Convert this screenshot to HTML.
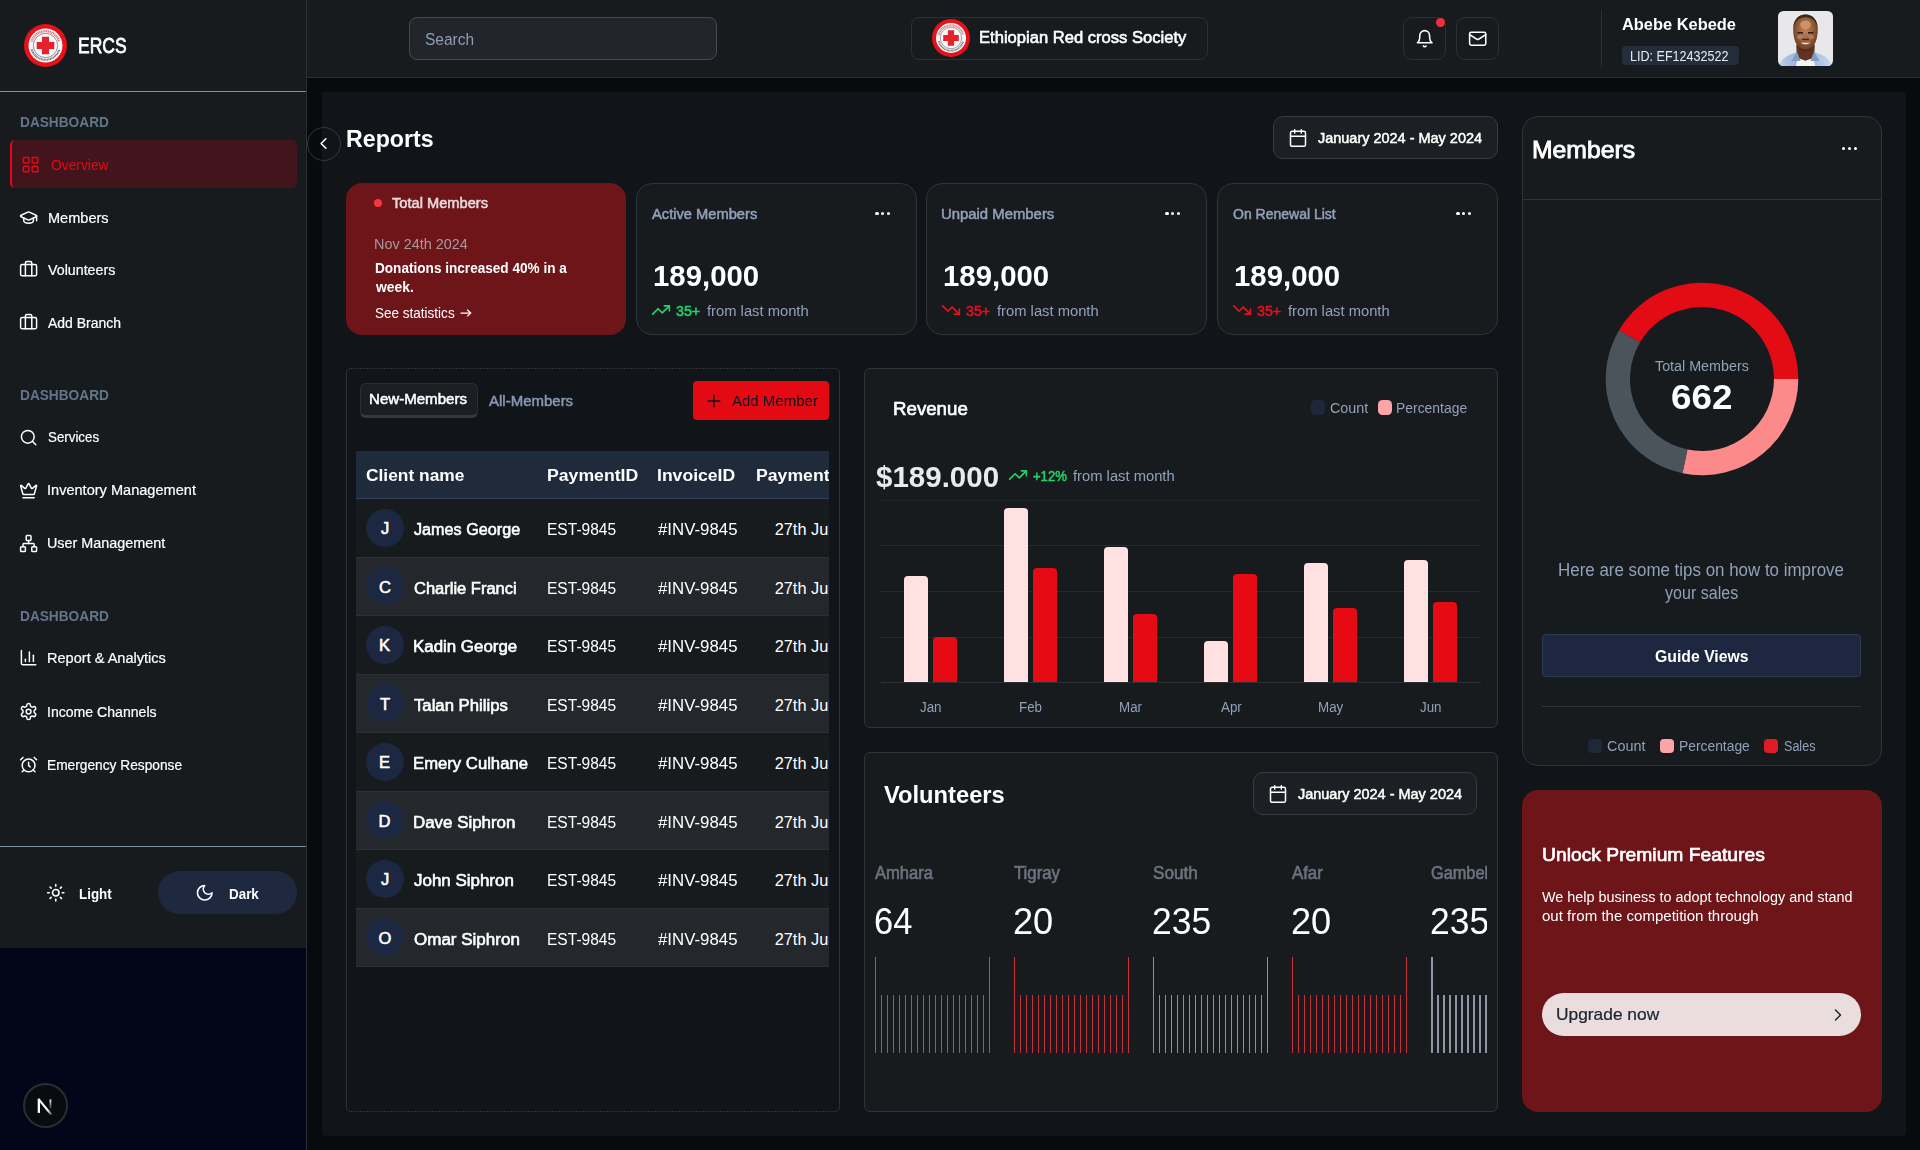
<!DOCTYPE html><html lang="en"><head><meta charset="utf-8"><title>ERCS Dashboard</title><style>
html,body{margin:0;padding:0;background:#070b0e;}
body{width:1920px;height:1150px;position:relative;overflow:hidden;font-family:"Liberation Sans",sans-serif;}
.a{position:absolute;}
.t{position:absolute;white-space:nowrap;transform-origin:0 50%;line-height:1;}
</style></head><body><div class="a" style="left:0px;top:0px;width:1920px;height:1150px;background:#070b0e;"></div><div class="a" style="left:0px;top:0px;width:306px;height:948px;background:#181b1e;"></div><div class="a" style="left:0px;top:948px;width:306px;height:202px;background:#020618;"></div><div class="a" style="left:306px;top:0px;width:1px;height:1150px;background:#2b2f34;"></div><div class="a" style="left:0px;top:91px;width:306px;height:1px;background:#8391a8;"></div><svg class="a" style="left:24px;top:24px" width="43" height="43" viewBox="0 0 100 100"><circle cx="50" cy="50" r="50" fill="#e8101a"/><circle cx="50" cy="50" r="39.5" fill="#f8f8f8"/><circle cx="50" cy="50" r="28.3" fill="none" stroke="#555a66" stroke-width="1.5"/><path d="M17.83 41.38A33.3 33.3 0 0 1 82.17 41.38" fill="none" stroke="#e2555d" stroke-width="5.2" stroke-dasharray="2.6 1.5" opacity=".85"/><path d="M17.83 58.62A33.3 33.3 0 0 0 82.17 58.62" fill="none" stroke="#3f434c" stroke-width="4.6" stroke-dasharray="2.2 1.4" opacity=".8"/><path d="M41.8 29.500h16.400v12.300H70.500v16.400H58.200V70.500h-16.400V58.200H29.500v-16.400h12.300z" fill="#e6212b"/></svg><span class="t" id="t0" style="left:77.50px;top:35.13px;font-size:21.7px;color:#ffffff;-webkit-text-stroke:0.76px #ffffff;transform:scaleX(0.8061);">ERCS</span><span class="t" id="t1" style="left:19.60px;top:115.11px;font-size:14.28px;color:#64748b;font-weight:700;transform:scaleX(0.9586);">DASHBOARD</span><span class="t" id="t2" style="left:19.60px;top:388.11px;font-size:14.28px;color:#64748b;font-weight:700;transform:scaleX(0.9586);">DASHBOARD</span><span class="t" id="t3" style="left:19.60px;top:608.81px;font-size:14.28px;color:#64748b;font-weight:700;transform:scaleX(0.9586);">DASHBOARD</span><div class="a" style="left:10px;top:140px;width:287px;height:48px;background:#42151c;border-radius:5px;border-left:2px solid #e50914;box-sizing:border-box;"></div><svg class="a" style="left:20.9px;top:155px;" width="19.2" height="19.2" viewBox="0 0 24 24" fill="none" stroke="#e50914" stroke-width="1.85" stroke-linecap="round" stroke-linejoin="round"><rect width="7" height="7" x="3" y="3" rx="1"/><rect width="7" height="7" x="14" y="3" rx="1"/><rect width="7" height="7" x="14" y="14" rx="1"/><rect width="7" height="7" x="3" y="14" rx="1"/></svg><span class="t" id="t4" style="left:50.60px;top:158.05px;font-size:14.59px;color:#e50914;transform:scaleX(0.9473);">Overview</span><svg class="a" style="left:19.2px;top:208.10000000000002px;" width="19.2" height="19.2" viewBox="0 0 24 24" fill="none" stroke="#ffffff" stroke-width="1.85" stroke-linecap="round" stroke-linejoin="round"><path d="M21.42 10.922a1 1 0 0 0-.019-1.838L12.83 5.18a2 2 0 0 0-1.66 0L2.6 9.08a1 1 0 0 0 0 1.832l8.57 3.908a2 2 0 0 0 1.66 0z"/><path d="M22 10v6"/><path d="M6 12.5V16a6 3 0 0 0 12 0v-3.5"/></svg><span class="t" id="t5" style="left:48.00px;top:211.05px;font-size:14.59px;color:#ffffff;-webkit-text-stroke:0.20px #ffffff;transform:scaleX(0.9972);">Members</span><svg class="a" style="left:19.2px;top:259.4px;" width="19.2" height="19.2" viewBox="0 0 24 24" fill="none" stroke="#ffffff" stroke-width="1.85" stroke-linecap="round" stroke-linejoin="round"><rect width="20" height="14" x="2" y="7" rx="2" ry="2"/><path d="M16 21V5a2 2 0 0 0-2-2h-4a2 2 0 0 0-2 2v16"/></svg><span class="t" id="t6" style="left:48.30px;top:263.05px;font-size:14.59px;color:#ffffff;-webkit-text-stroke:0.20px #ffffff;transform:scaleX(0.9767);">Volunteers</span><svg class="a" style="left:19.2px;top:311.99999999999994px;" width="19.2" height="19.2" viewBox="0 0 24 24" fill="none" stroke="#ffffff" stroke-width="1.85" stroke-linecap="round" stroke-linejoin="round"><rect width="20" height="14" x="2" y="7" rx="2" ry="2"/><path d="M16 21V5a2 2 0 0 0-2-2h-4a2 2 0 0 0-2 2v16"/></svg><span class="t" id="t7" style="left:48.30px;top:315.65px;font-size:14.59px;color:#ffffff;-webkit-text-stroke:0.20px #ffffff;transform:scaleX(0.9584);">Add Branch</span><svg class="a" style="left:19.2px;top:428.1px;" width="19.2" height="19.2" viewBox="0 0 24 24" fill="none" stroke="#ffffff" stroke-width="1.85" stroke-linecap="round" stroke-linejoin="round"><circle cx="11" cy="11" r="8"/><path d="m21 21-4.3-4.3"/></svg><span class="t" id="t8" style="left:48.29px;top:430.35px;font-size:14.59px;color:#ffffff;-webkit-text-stroke:0.20px #ffffff;transform:scaleX(0.9137);">Services</span><svg class="a" style="left:19.2px;top:480.59999999999997px;" width="19.2" height="19.2" viewBox="0 0 24 24" fill="none" stroke="#ffffff" stroke-width="1.85" stroke-linecap="round" stroke-linejoin="round"><path d="M11.562 3.266a.5.5 0 0 1 .876 0L15.39 8.87a1 1 0 0 0 1.516.294L21.183 5.5a.5.5 0 0 1 .798.519l-2.834 10.246a1 1 0 0 1-.956.734H5.81a1 1 0 0 1-.957-.734L2.02 6.02a.5.5 0 0 1 .798-.519l4.276 3.664a1 1 0 0 0 1.516-.294z"/><path d="M5 21h14"/></svg><span class="t" id="t9" style="left:47.30px;top:483.25px;font-size:14.59px;color:#ffffff;-webkit-text-stroke:0.20px #ffffff;transform:scaleX(0.9989);">Inventory Management</span><svg class="a" style="left:19.2px;top:534.0px;" width="19.2" height="19.2" viewBox="0 0 24 24" fill="none" stroke="#ffffff" stroke-width="1.85" stroke-linecap="round" stroke-linejoin="round"><rect x="16" y="16" width="6" height="6" rx="1"/><rect x="2" y="16" width="6" height="6" rx="1"/><rect x="9" y="2" width="6" height="6" rx="1"/><path d="M5 16v-3a1 1 0 0 1 1-1h12a1 1 0 0 1 1 1v3"/><path d="M12 12V8"/></svg><span class="t" id="t10" style="left:47.32px;top:536.25px;font-size:14.59px;color:#ffffff;-webkit-text-stroke:0.20px #ffffff;transform:scaleX(0.9851);">User Management</span><svg class="a" style="left:19.2px;top:648.0px;" width="19.2" height="19.2" viewBox="0 0 24 24" fill="none" stroke="#ffffff" stroke-width="1.85" stroke-linecap="round" stroke-linejoin="round"><path d="M3 3v16a2 2 0 0 0 2 2h16"/><path d="M18 17V9"/><path d="M13 17V5"/><path d="M8 17v-3"/></svg><span class="t" id="t11" style="left:47.30px;top:651.45px;font-size:14.59px;color:#ffffff;-webkit-text-stroke:0.20px #ffffff;transform:scaleX(0.9981);">Report &amp; Analytics</span><svg class="a" style="left:19.2px;top:701.9px;" width="19.2" height="19.2" viewBox="0 0 24 24" fill="none" stroke="#ffffff" stroke-width="1.85" stroke-linecap="round" stroke-linejoin="round"><path d="M12.22 2h-.44a2 2 0 0 0-2 2v.18a2 2 0 0 1-1 1.73l-.43.25a2 2 0 0 1-2 0l-.15-.08a2 2 0 0 0-2.73.73l-.22.38a2 2 0 0 0 .73 2.73l.15.1a2 2 0 0 1 1 1.72v.51a2 2 0 0 1-1 1.74l-.15.09a2 2 0 0 0-.73 2.73l.22.38a2 2 0 0 0 2.73.73l.15-.08a2 2 0 0 1 2 0l.43.25a2 2 0 0 1 1 1.73V20a2 2 0 0 0 2 2h.44a2 2 0 0 0 2-2v-.18a2 2 0 0 1 1-1.73l.43-.25a2 2 0 0 1 2 0l.15.08a2 2 0 0 0 2.73-.73l.22-.39a2 2 0 0 0-.73-2.73l-.15-.08a2 2 0 0 1-1-1.74v-.5a2 2 0 0 1 1-1.74l.15-.09a2 2 0 0 0 .73-2.73l-.22-.38a2 2 0 0 0-2.73-.73l-.15.08a2 2 0 0 1-2 0l-.43-.25a2 2 0 0 1-1-1.73V4a2 2 0 0 0-2-2z"/><circle cx="12" cy="12" r="3"/></svg><span class="t" id="t12" style="left:47.33px;top:704.75px;font-size:14.59px;color:#ffffff;-webkit-text-stroke:0.20px #ffffff;transform:scaleX(0.9656);">Income Channels</span><svg class="a" style="left:19.2px;top:754.8px;" width="19.2" height="19.2" viewBox="0 0 24 24" fill="none" stroke="#ffffff" stroke-width="1.85" stroke-linecap="round" stroke-linejoin="round"><circle cx="12" cy="13" r="8"/><path d="M12 9v4l2 2"/><path d="M5 3 2 6"/><path d="m22 6-3-3"/><path d="M6.38 18.7 4 21"/><path d="M17.64 18.67 20 21"/></svg><span class="t" id="t13" style="left:47.35px;top:757.65px;font-size:14.59px;color:#ffffff;-webkit-text-stroke:0.20px #ffffff;transform:scaleX(0.9416);">Emergency Response</span><div class="a" style="left:0px;top:846px;width:306px;height:1px;background:#8391a8;"></div><svg class="a" style="left:46px;top:883px;" width="19.5" height="19.5" viewBox="0 0 24 24" fill="none" stroke="#ffffff" stroke-width="1.9" stroke-linecap="round" stroke-linejoin="round"><circle cx="12" cy="12" r="4"/><path d="M12 2v2"/><path d="M12 20v2"/><path d="m4.93 4.93 1.41 1.41"/><path d="m17.66 17.66 1.41 1.41"/><path d="M2 12h2"/><path d="M20 12h2"/><path d="m6.34 17.66-1.41 1.41"/><path d="m19.07 4.93-1.41 1.41"/></svg><span class="t" id="t14" style="left:79.40px;top:886.68px;font-size:14.08px;color:#ffffff;font-weight:700;transform:scaleX(0.9507);">Light</span><div class="a" style="left:158px;top:871px;width:138.8px;height:42.8px;background:#1e2940;border-radius:22px;"></div><svg class="a" style="left:195px;top:882.6px;" width="19.5" height="19.5" viewBox="0 0 24 24" fill="none" stroke="#ffffff" stroke-width="1.9" stroke-linecap="round" stroke-linejoin="round"><path d="M12 3a6 6 0 0 0 9 9 9 9 0 1 1-9-9Z"/></svg><span class="t" id="t15" style="left:228.70px;top:886.68px;font-size:14.08px;color:#ffffff;font-weight:700;transform:scaleX(0.9531);">Dark</span><div class="a" style="left:23px;top:1083px;width:45px;height:45px;background:#090c0f;border-radius:50%;border:2px solid #2a2d31;box-sizing:border-box;"></div><svg class="a" style="left:36px;top:1097px" width="18" height="20" viewBox="0 0 18 20"><defs><linearGradient id="ng" gradientUnits="userSpaceOnUse" x1="2.6" y1="2.1" x2="15.3" y2="17.6"><stop offset="0.7" stop-color="#fff"/><stop offset="1" stop-color="#fff" stop-opacity="0.3"/></linearGradient><linearGradient id="ng2" gradientUnits="userSpaceOnUse" x1="0" y1="2.4" x2="0" y2="11.3"><stop offset="0.1" stop-color="#fff" stop-opacity="0.9"/><stop offset="1" stop-color="#fff" stop-opacity="0.15"/></linearGradient></defs><path d="M2.850 1.700V15.900" stroke="#fff" stroke-width="2.300" fill="none"/><path d="M2.600 2.100L15.300 17.600" stroke="url(#ng)" stroke-width="2.200" fill="none"/><path d="M14.450 2.400v8.900" stroke="url(#ng2)" stroke-width="1.800" fill="none"/></svg><div class="a" style="left:307px;top:0px;width:1613px;height:77px;background:#181b1e;"></div><div class="a" style="left:307px;top:77px;width:1613px;height:1px;background:#2b2f34;"></div><div class="a" style="left:409px;top:17px;width:308px;height:43px;background:#22262a;border:1px solid #464a4f;border-radius:8px;box-sizing:border-box;"></div><span class="t" id="t16" style="left:424.80px;top:30.76px;font-size:16.35px;color:#8d9db5;transform:scaleX(0.9479);">Search</span><div class="a" style="left:911px;top:17px;width:297px;height:43px;border:1px solid #2b2f34;border-radius:8px;box-sizing:border-box;"></div><svg class="a" style="left:932px;top:19.2px" width="38" height="38" viewBox="0 0 100 100"><circle cx="50" cy="50" r="50" fill="#e8101a"/><circle cx="50" cy="50" r="39.5" fill="#f8f8f8"/><circle cx="50" cy="50" r="28.3" fill="none" stroke="#555a66" stroke-width="1.5"/><path d="M17.83 41.38A33.3 33.3 0 0 1 82.17 41.38" fill="none" stroke="#e2555d" stroke-width="5.2" stroke-dasharray="2.6 1.5" opacity=".85"/><path d="M17.83 58.62A33.3 33.3 0 0 0 82.17 58.62" fill="none" stroke="#3f434c" stroke-width="4.6" stroke-dasharray="2.2 1.4" opacity=".8"/><path d="M41.8 29.500h16.400v12.300H70.500v16.400H58.200V70.500h-16.400V58.200H29.500v-16.400h12.300z" fill="#e6212b"/></svg><span class="t" id="t17" style="left:979.49px;top:29.88px;font-size:16.56px;color:#ffffff;-webkit-text-stroke:0.58px #ffffff;transform:scaleX(1.0017);">Ethiopian Red cross Society</span><div class="a" style="left:1403px;top:17px;width:43px;height:43px;border:1px solid #2b2f34;border-radius:9px;box-sizing:border-box;"></div><svg class="a" style="left:1415px;top:28.5px;" width="19.4" height="19.4" viewBox="0 0 24 24" fill="none" stroke="#ffffff" stroke-width="1.9" stroke-linecap="round" stroke-linejoin="round"><path d="M6 8a6 6 0 0 1 12 0c0 7 3 9 3 9H3s3-2 3-9"/><path d="M10.3 21a1.94 1.94 0 0 0 3.4 0"/></svg><div class="a" style="left:1436px;top:18px;width:9px;height:9px;background:#f0303c;border-radius:50%;"></div><div class="a" style="left:1456px;top:17px;width:43px;height:43px;border:1px solid #2b2f34;border-radius:9px;box-sizing:border-box;"></div><svg class="a" style="left:1467.7px;top:28.6px;" width="19.4" height="19.4" viewBox="0 0 24 24" fill="none" stroke="#ffffff" stroke-width="1.9" stroke-linecap="round" stroke-linejoin="round"><rect width="20" height="16" x="2" y="4" rx="2"/><path d="m22 7-8.97 5.7a1.94 1.94 0 0 1-2.06 0L2 7"/></svg><div class="a" style="left:1601px;top:10px;width:1px;height:57px;background:#2b2f34;"></div><span class="t" id="t18" style="left:1622.00px;top:15.93px;font-size:16.15px;color:#ffffff;font-weight:700;transform:scaleX(1.0166);">Abebe Kebede</span><div class="a" style="left:1622px;top:46px;width:117px;height:19px;background:#242e3a;border-radius:4px;"></div><span class="t" id="t19" style="left:1630.11px;top:49.48px;font-size:14.08px;color:#e6ebf2;transform:scaleX(0.8920);">LID: EF12432522</span><svg class="a" style="left:1778px;top:11px" width="55" height="55" viewBox="0 0 55 55"><defs><radialGradient id="fg" cx="0.5" cy="0.42" r="0.62"><stop offset="0" stop-color="#c08258"/><stop offset="0.45" stop-color="#9c6440"/><stop offset="0.8" stop-color="#744428"/><stop offset="1" stop-color="#4f2c1b"/></radialGradient><linearGradient id="sh" x1="0" x2="1"><stop offset="0" stop-color="#b9cfec"/><stop offset="0.3" stop-color="#9db8db"/><stop offset="0.7" stop-color="#a8c2e4"/><stop offset="1" stop-color="#c5d8f0"/></linearGradient><filter id="bl" x="-10%" y="-10%" width="120%" height="120%"><feGaussianBlur stdDeviation="0.45"/></filter><clipPath id="avc"><rect width="55" height="55" rx="5.5"/></clipPath></defs><rect width="55" height="55" rx="5.5" fill="#e8e8ea"/><g clip-path="url(#avc)"><g filter="url(#bl)"><path d="M1 57c1-8 6-12 14-14.500l9-3h7l9 3c8 2.500 13 6.500 14 14.500z" fill="url(#sh)"/><path d="M17.500 57l2-9.500 8 1.500 8-1.500 2 9.500z" fill="#f4f4f4"/><path d="M18.200 34h18.600l-.8 12.500-8.500 3.200-8.500-3.200z" fill="#5e3120"/><path d="M13.500 50l5.500-9.500 3.500 9.500z" fill="#7f9cc2"/><path d="M41.500 50l-5.500-9.500-3.500 9.500z" fill="#7f9cc2"/><path d="M27.500 3.600c7.200 0 12.300 5.600 12.300 14.800 0 4-.6 8.600-2.200 12.600-2 5-5.800 9.400-10.100 9.400s-8.100-4.400-10.100-9.400c-1.600-4-2.200-8.600-2.200-12.600 0-9.200 5.100-14.800 12.300-14.800z" fill="url(#fg)"/><path d="M15.300 17.500c.2-8.800 5.200-14 12.200-14s12 5.200 12.200 14c-1.400-7.400-5.400-11.200-12.200-11.200s-10.800 3.800-12.200 11.200z" fill="#2f1e16" opacity=".85"/><ellipse cx="27.500" cy="13.800" rx="5.400" ry="4.200" fill="#d99a72" opacity=".8"/><ellipse cx="22" cy="26" rx="3" ry="2.200" fill="#c78a63" opacity=".6"/><ellipse cx="33" cy="26" rx="3" ry="2.200" fill="#c78a63" opacity=".6"/><path d="M19.500 21.800h5.500M30 21.800h5.500" stroke="#2e1a12" stroke-width="1.500"/><path d="M24 27.800c1.500 1.200 5.500 1.200 7 0" stroke="#4a2415" stroke-width="1.200" fill="none"/><path d="M22.800 31.200c2 2.800 7.400 2.800 9.400 0-2 .7-7.400.7-9.400 0z" fill="#f6ece6"/><path d="M20.500 35.500c2.500 4.200 11.500 4.200 14 0-1.500 5.800-12.500 5.800-14 0z" fill="#3e2216" opacity=".8"/></g></g></svg><div class="a" style="left:322px;top:92px;width:1584px;height:1044px;background:#111418;border-radius:4px;"></div><div class="a" style="left:307px;top:127px;width:34px;height:34px;border:1px solid #34383d;border-radius:50%;box-sizing:border-box;"></div><svg class="a" style="left:314px;top:134.2px;" width="19" height="19" viewBox="0 0 24 24" fill="none" stroke="#ffffff" stroke-width="2" stroke-linecap="round" stroke-linejoin="round"><path d="m15 18-6-6 6-6"/></svg><span class="t" id="t20" style="left:345.71px;top:127.99px;font-size:23.4px;color:#ffffff;font-weight:700;transform:scaleX(0.9912);">Reports</span><div class="a" style="left:1273px;top:116px;width:225px;height:42.8px;background:#1c1f23;border:1px solid #383c42;border-radius:10px;box-sizing:border-box;"></div><svg class="a" style="left:1287.6px;top:127.9px;" width="20" height="20" viewBox="0 0 24 24" fill="none" stroke="#ffffff" stroke-width="1.8" stroke-linecap="round" stroke-linejoin="round"><path d="M8 2v4"/><path d="M16 2v4"/><rect width="18" height="18" x="3" y="4" rx="2"/><path d="M3 10h18"/></svg><span class="t" id="t21" style="left:1317.55px;top:130.78px;font-size:14.08px;color:#ffffff;-webkit-text-stroke:0.49px #ffffff;transform:scaleX(1.0274);">January 2024 - May 2024</span><div class="a" style="left:346px;top:183px;width:280px;height:152px;background:#6e1519;border-radius:16px;"></div><div class="a" style="left:374.3px;top:198.8px;width:8px;height:8px;background:#f9353f;border-radius:50%;"></div><span class="t" id="t22" style="left:391.86px;top:196.97px;font-size:13.97px;color:#e9dcdc;-webkit-text-stroke:0.49px #e9dcdc;transform:scaleX(1.0477);">Total Members</span><span class="t" id="t23" style="left:373.78px;top:236.98px;font-size:14.08px;color:#a89a9b;transform:scaleX(1.0248);">Nov 24th 2024</span><span class="t" id="t24" style="left:374.80px;top:261.18px;font-size:14.08px;color:#ffffff;font-weight:700;transform:scaleX(0.9653);">Donations increased 40% in a</span><span class="t" id="t25" style="left:375.79px;top:279.78px;font-size:14.08px;color:#ffffff;font-weight:700;transform:scaleX(0.9886);">week.</span><span class="t" id="t26" style="left:374.80px;top:305.68px;font-size:14.08px;color:#ffffff;transform:scaleX(0.9602);">See statistics</span><svg class="a" style="left:459.500px;top:308px" width="12" height="10" viewBox="0 0 12 10" fill="none" stroke="#fff" stroke-width="1.250"><path d="M0.500 5.100h10.200M7.200 1.800l3.500 3.300-3.500 3.300"/></svg><div class="a" style="left:636px;top:183px;width:281px;height:152px;background:#181b1e;border:1px solid #303439;border-radius:16px;box-sizing:border-box;"></div><span class="t" id="t27" style="left:651.86px;top:207.18px;font-size:14.08px;color:#90a1b9;-webkit-text-stroke:0.49px #90a1b9;transform:scaleX(1.0427);">Active Members</span><div class="a" style="left:875.45px;top:212.05px;width:3.1px;height:3.1px;background:#ffffff;border-radius:50%;"></div><div class="a" style="left:881.05px;top:212.05px;width:3.1px;height:3.1px;background:#ffffff;border-radius:50%;"></div><div class="a" style="left:886.65px;top:212.05px;width:3.1px;height:3.1px;background:#ffffff;border-radius:50%;"></div><span class="t" id="t28" style="left:652.52px;top:260.61px;font-size:30px;color:#ffffff;font-weight:700;transform:scaleX(0.9789);">189,000</span><svg class="a" style="left:651px;top:300px;" width="20" height="20" viewBox="0 0 24 24" fill="none" stroke="#22d369" stroke-width="2" stroke-linecap="round" stroke-linejoin="round"><polyline points="22 7 13.5 15.5 8.5 10.5 2 17"/><polyline points="16 7 22 7 22 13"/></svg><span class="t" id="t29" style="left:676.45px;top:304.02px;font-size:14.39px;color:#22d369;-webkit-text-stroke:0.50px #22d369;transform:scaleX(0.9921);">35+</span><span class="t" id="t30" style="left:706.60px;top:304.18px;font-size:14.08px;color:#90a1b9;transform:scaleX(1.0480);">from last month</span><div class="a" style="left:926px;top:183px;width:281px;height:152px;background:#181b1e;border:1px solid #303439;border-radius:16px;box-sizing:border-box;"></div><span class="t" id="t31" style="left:940.80px;top:207.18px;font-size:14.08px;color:#90a1b9;-webkit-text-stroke:0.49px #90a1b9;transform:scaleX(1.0567);">Unpaid Members</span><div class="a" style="left:1165.45px;top:212.05px;width:3.1px;height:3.1px;background:#ffffff;border-radius:50%;"></div><div class="a" style="left:1171.05px;top:212.05px;width:3.1px;height:3.1px;background:#ffffff;border-radius:50%;"></div><div class="a" style="left:1176.65px;top:212.05px;width:3.1px;height:3.1px;background:#ffffff;border-radius:50%;"></div><span class="t" id="t32" style="left:942.52px;top:260.61px;font-size:30px;color:#ffffff;font-weight:700;transform:scaleX(0.9789);">189,000</span><svg class="a" style="left:941px;top:299.6px;" width="20" height="20" viewBox="0 0 24 24" fill="none" stroke="#e5121f" stroke-width="2" stroke-linecap="round" stroke-linejoin="round"><polyline points="22 17 13.5 8.5 8.5 13.5 2 7"/><polyline points="16 17 22 17 22 11"/></svg><span class="t" id="t33" style="left:966.45px;top:304.02px;font-size:14.39px;color:#e5121f;-webkit-text-stroke:0.50px #e5121f;transform:scaleX(0.9921);">35+</span><span class="t" id="t34" style="left:996.60px;top:304.18px;font-size:14.08px;color:#90a1b9;transform:scaleX(1.0480);">from last month</span><div class="a" style="left:1217px;top:183px;width:281px;height:152px;background:#181b1e;border:1px solid #303439;border-radius:16px;box-sizing:border-box;"></div><span class="t" id="t35" style="left:1232.85px;top:207.18px;font-size:14.08px;color:#90a1b9;-webkit-text-stroke:0.49px #90a1b9;transform:scaleX(0.9945);">On Renewal List</span><div class="a" style="left:1456.45px;top:212.05px;width:3.1px;height:3.1px;background:#ffffff;border-radius:50%;"></div><div class="a" style="left:1462.05px;top:212.05px;width:3.1px;height:3.1px;background:#ffffff;border-radius:50%;"></div><div class="a" style="left:1467.65px;top:212.05px;width:3.1px;height:3.1px;background:#ffffff;border-radius:50%;"></div><span class="t" id="t36" style="left:1233.52px;top:260.61px;font-size:30px;color:#ffffff;font-weight:700;transform:scaleX(0.9789);">189,000</span><svg class="a" style="left:1232px;top:299.6px;" width="20" height="20" viewBox="0 0 24 24" fill="none" stroke="#e5121f" stroke-width="2" stroke-linecap="round" stroke-linejoin="round"><polyline points="22 17 13.5 8.5 8.5 13.5 2 7"/><polyline points="16 17 22 17 22 11"/></svg><span class="t" id="t37" style="left:1257.45px;top:304.02px;font-size:14.39px;color:#e5121f;-webkit-text-stroke:0.50px #e5121f;transform:scaleX(0.9921);">35+</span><span class="t" id="t38" style="left:1287.60px;top:304.18px;font-size:14.08px;color:#90a1b9;transform:scaleX(1.0480);">from last month</span><svg class="a" style="left:346px;top:368px" width="494" height="744" viewBox="0 0 494 744" fill="none" stroke="#2f3338" stroke-width="1"><path d="M5.0 0.500A4.5 4.5 0 0 0 0.500 5.0V739.0A4.5 4.5 0 0 0 5.0 743.5M489.0 0.500A4.5 4.5 0 0 1 493.5 5.0V739.0A4.5 4.5 0 0 1 489.0 743.5"/><path d="M5.0 0.500H489.0M5.0 743.5H489.0" stroke-dasharray="2 1"/></svg><div class="a" style="left:360px;top:383px;width:118px;height:35px;background:#1b1e22;border:1px solid #2b2f34;border-radius:6px;box-sizing:border-box;border-bottom:3px solid #35393e;"></div><span class="t" id="t39" style="left:369.29px;top:392.38px;font-size:14.08px;color:#ffffff;-webkit-text-stroke:0.49px #ffffff;transform:scaleX(1.0706);">New-Members</span><span class="t" id="t40" style="left:488.76px;top:394.18px;font-size:14.08px;color:#8697b2;-webkit-text-stroke:0.49px #8697b2;transform:scaleX(1.0647);">All-Members</span><div class="a" style="left:693px;top:381px;width:136px;height:39px;background:#e30a14;border-radius:4px;"></div><svg class="a" style="left:704.3px;top:391px;" width="20" height="20" viewBox="0 0 24 24" fill="none" stroke="#10161f" stroke-width="1.6" stroke-linecap="round" stroke-linejoin="round"><path d="M5 12h14"/><path d="M12 5v14"/></svg><span class="t" id="t41" style="left:731.60px;top:393.86px;font-size:14.7px;color:#10161f;transform:scaleX(1.0215);">Add Member</span><div class="a" style="left:356px;top:451px;width:473px;height:47.5px;background:#1f2a3b;"></div><div class="a" style="left:356px;top:498px;width:473px;height:1px;background:#33425a;"></div><span class="t" id="t42" style="left:366.00px;top:466.66px;font-size:16.35px;color:#ffffff;font-weight:700;transform:scaleX(1.0622);">Client name</span><span class="t" id="t43" style="left:546.72px;top:466.66px;font-size:16.35px;color:#ffffff;font-weight:700;transform:scaleX(1.0804);">PaymentID</span><span class="t" id="t44" style="left:656.72px;top:466.66px;font-size:16.35px;color:#ffffff;font-weight:700;transform:scaleX(1.0757);">InvoiceID</span><div class="a" style="left:356px;top:499px;width:473px;height:59px;background:#181b1e;"></div><div class="a" style="left:356px;top:557px;width:473px;height:1px;background:#2d3136;"></div><div class="a" style="left:366px;top:508.85px;width:38px;height:38px;background:#1c2741;border-radius:50%;"></div><span class="t" id="t45" style="left:381.00px;top:521.13px;font-size:16.56px;color:#ffffff;-webkit-text-stroke:0.58px #ffffff;transform:scaleX(1.0000);">J</span><span class="t" id="t46" style="left:414.08px;top:521.02px;font-size:16.46px;color:#ffffff;-webkit-text-stroke:0.58px #ffffff;transform:scaleX(0.9848);">James George</span><span class="t" id="t47" style="left:546.95px;top:521.11px;font-size:16.35px;color:#ffffff;transform:scaleX(0.9512);">EST-9845</span><span class="t" id="t48" style="left:657.80px;top:521.11px;font-size:16.35px;color:#ffffff;transform:scaleX(1.0305);">#INV-9845</span><div class="a" style="left:356px;top:558px;width:473px;height:58px;background:#24272b;"></div><div class="a" style="left:356px;top:615px;width:473px;height:1px;background:#2d3136;"></div><div class="a" style="left:366px;top:567.35px;width:38px;height:38px;background:#1c2741;border-radius:50%;"></div><span class="t" id="t49" style="left:379.00px;top:579.63px;font-size:16.56px;color:#ffffff;-webkit-text-stroke:0.58px #ffffff;transform:scaleX(1.0000);">C</span><span class="t" id="t50" style="left:414.09px;top:579.52px;font-size:16.46px;color:#ffffff;-webkit-text-stroke:0.58px #ffffff;transform:scaleX(1.0036);">Charlie Franci</span><span class="t" id="t51" style="left:546.95px;top:579.61px;font-size:16.35px;color:#ffffff;transform:scaleX(0.9512);">EST-9845</span><span class="t" id="t52" style="left:657.80px;top:579.61px;font-size:16.35px;color:#ffffff;transform:scaleX(1.0305);">#INV-9845</span><div class="a" style="left:356px;top:616px;width:473px;height:59px;background:#181b1e;"></div><div class="a" style="left:356px;top:674px;width:473px;height:1px;background:#2d3136;"></div><div class="a" style="left:366px;top:625.85px;width:38px;height:38px;background:#1c2741;border-radius:50%;"></div><span class="t" id="t53" style="left:379.00px;top:638.13px;font-size:16.56px;color:#ffffff;-webkit-text-stroke:0.58px #ffffff;transform:scaleX(1.0000);">K</span><span class="t" id="t54" style="left:413.07px;top:638.02px;font-size:16.46px;color:#ffffff;-webkit-text-stroke:0.58px #ffffff;transform:scaleX(1.0271);">Kadin George</span><span class="t" id="t55" style="left:546.95px;top:638.11px;font-size:16.35px;color:#ffffff;transform:scaleX(0.9512);">EST-9845</span><span class="t" id="t56" style="left:657.80px;top:638.11px;font-size:16.35px;color:#ffffff;transform:scaleX(1.0305);">#INV-9845</span><div class="a" style="left:356px;top:675px;width:473px;height:58px;background:#24272b;"></div><div class="a" style="left:356px;top:732px;width:473px;height:1px;background:#2d3136;"></div><div class="a" style="left:366px;top:684.35px;width:38px;height:38px;background:#1c2741;border-radius:50%;"></div><span class="t" id="t57" style="left:380.00px;top:696.63px;font-size:16.56px;color:#ffffff;-webkit-text-stroke:0.58px #ffffff;transform:scaleX(1.0000);">T</span><span class="t" id="t58" style="left:414.09px;top:696.52px;font-size:16.46px;color:#ffffff;-webkit-text-stroke:0.58px #ffffff;transform:scaleX(1.0168);">Talan Philips</span><span class="t" id="t59" style="left:546.95px;top:696.61px;font-size:16.35px;color:#ffffff;transform:scaleX(0.9512);">EST-9845</span><span class="t" id="t60" style="left:657.80px;top:696.61px;font-size:16.35px;color:#ffffff;transform:scaleX(1.0305);">#INV-9845</span><div class="a" style="left:356px;top:733px;width:473px;height:59px;background:#181b1e;"></div><div class="a" style="left:356px;top:791px;width:473px;height:1px;background:#2d3136;"></div><div class="a" style="left:366px;top:742.85px;width:38px;height:38px;background:#1c2741;border-radius:50%;"></div><span class="t" id="t61" style="left:379.00px;top:755.13px;font-size:16.56px;color:#ffffff;-webkit-text-stroke:0.58px #ffffff;transform:scaleX(1.0000);">E</span><span class="t" id="t62" style="left:413.08px;top:755.02px;font-size:16.46px;color:#ffffff;-webkit-text-stroke:0.58px #ffffff;transform:scaleX(1.0149);">Emery Culhane</span><span class="t" id="t63" style="left:546.95px;top:755.11px;font-size:16.35px;color:#ffffff;transform:scaleX(0.9512);">EST-9845</span><span class="t" id="t64" style="left:657.80px;top:755.11px;font-size:16.35px;color:#ffffff;transform:scaleX(1.0305);">#INV-9845</span><div class="a" style="left:356px;top:792px;width:473px;height:58px;background:#24272b;"></div><div class="a" style="left:356px;top:849px;width:473px;height:1px;background:#2d3136;"></div><div class="a" style="left:366px;top:801.35px;width:38px;height:38px;background:#1c2741;border-radius:50%;"></div><span class="t" id="t65" style="left:378.50px;top:813.63px;font-size:16.56px;color:#ffffff;-webkit-text-stroke:0.58px #ffffff;transform:scaleX(1.0000);">D</span><span class="t" id="t66" style="left:413.07px;top:813.52px;font-size:16.46px;color:#ffffff;-webkit-text-stroke:0.58px #ffffff;transform:scaleX(1.0280);">Dave Siphron</span><span class="t" id="t67" style="left:546.95px;top:813.61px;font-size:16.35px;color:#ffffff;transform:scaleX(0.9512);">EST-9845</span><span class="t" id="t68" style="left:657.80px;top:813.61px;font-size:16.35px;color:#ffffff;transform:scaleX(1.0305);">#INV-9845</span><div class="a" style="left:356px;top:850px;width:473px;height:59px;background:#181b1e;"></div><div class="a" style="left:356px;top:908px;width:473px;height:1px;background:#2d3136;"></div><div class="a" style="left:366px;top:859.85px;width:38px;height:38px;background:#1c2741;border-radius:50%;"></div><span class="t" id="t69" style="left:381.00px;top:872.13px;font-size:16.56px;color:#ffffff;-webkit-text-stroke:0.58px #ffffff;transform:scaleX(1.0000);">J</span><span class="t" id="t70" style="left:414.10px;top:872.02px;font-size:16.46px;color:#ffffff;-webkit-text-stroke:0.58px #ffffff;transform:scaleX(1.0308);">John Siphron</span><span class="t" id="t71" style="left:546.95px;top:872.11px;font-size:16.35px;color:#ffffff;transform:scaleX(0.9512);">EST-9845</span><span class="t" id="t72" style="left:657.80px;top:872.11px;font-size:16.35px;color:#ffffff;transform:scaleX(1.0305);">#INV-9845</span><div class="a" style="left:356px;top:909px;width:473px;height:58px;background:#24272b;"></div><div class="a" style="left:356px;top:966px;width:473px;height:1px;background:#2d3136;"></div><div class="a" style="left:366px;top:918.35px;width:38px;height:38px;background:#1c2741;border-radius:50%;"></div><span class="t" id="t73" style="left:378.50px;top:930.63px;font-size:16.56px;color:#ffffff;-webkit-text-stroke:0.58px #ffffff;transform:scaleX(1.0000);">O</span><span class="t" id="t74" style="left:414.10px;top:930.52px;font-size:16.46px;color:#ffffff;-webkit-text-stroke:0.58px #ffffff;transform:scaleX(1.0345);">Omar Siphron</span><span class="t" id="t75" style="left:546.95px;top:930.61px;font-size:16.35px;color:#ffffff;transform:scaleX(0.9512);">EST-9845</span><span class="t" id="t76" style="left:657.80px;top:930.61px;font-size:16.35px;color:#ffffff;transform:scaleX(1.0305);">#INV-9845</span><div class="a" style="left:756px;top:451px;width:73px;height:520px;overflow:hidden"><span class="t" id="t77" style="left:-0.18px;top:15.66px;font-size:16.35px;color:#ffffff;font-weight:700;transform:scaleX(1.0800);">Payment date</span><span class="t" id="t78" style="left:18.70px;top:70.11px;font-size:16.35px;color:#ffffff;transform:scaleX(1.0000);">27th Jul 2024</span><span class="t" id="t79" style="left:18.70px;top:128.61px;font-size:16.35px;color:#ffffff;transform:scaleX(1.0000);">27th Jul 2024</span><span class="t" id="t80" style="left:18.70px;top:187.11px;font-size:16.35px;color:#ffffff;transform:scaleX(1.0000);">27th Jul 2024</span><span class="t" id="t81" style="left:18.70px;top:245.61px;font-size:16.35px;color:#ffffff;transform:scaleX(1.0000);">27th Jul 2024</span><span class="t" id="t82" style="left:18.70px;top:304.11px;font-size:16.35px;color:#ffffff;transform:scaleX(1.0000);">27th Jul 2024</span><span class="t" id="t83" style="left:18.70px;top:362.61px;font-size:16.35px;color:#ffffff;transform:scaleX(1.0000);">27th Jul 2024</span><span class="t" id="t84" style="left:18.70px;top:421.11px;font-size:16.35px;color:#ffffff;transform:scaleX(1.0000);">27th Jul 2024</span><span class="t" id="t85" style="left:18.70px;top:479.61px;font-size:16.35px;color:#ffffff;transform:scaleX(1.0000);">27th Jul 2024</span></div><div class="a" style="left:864px;top:368px;width:634px;height:360px;background:#181b1e;border:1px solid #303439;border-radius:6px;box-sizing:border-box;"></div><span class="t" id="t86" style="left:893.29px;top:400.45px;font-size:18.01px;color:#ffffff;-webkit-text-stroke:0.63px #ffffff;transform:scaleX(1.0381);">Revenue</span><div class="a" style="left:1311px;top:400px;width:14px;height:15px;background:#1f283a;border-radius:4.5px;"></div><span class="t" id="t87" style="left:1329.90px;top:400.58px;font-size:14.08px;color:#90a1b9;transform:scaleX(1.0198);">Count</span><div class="a" style="left:1378px;top:400px;width:14px;height:15px;background:#fda4a7;border-radius:4.5px;"></div><span class="t" id="t88" style="left:1396.41px;top:400.58px;font-size:14.08px;color:#90a1b9;transform:scaleX(0.9877);">Percentage</span><span class="t" id="t89" style="left:875.50px;top:461.54px;font-size:30.2px;color:#e8eaee;font-weight:700;transform:scaleX(0.9775);">$189.000</span><svg class="a" style="left:1008.2px;top:465px;" width="20" height="20" viewBox="0 0 24 24" fill="none" stroke="#22d369" stroke-width="1.9" stroke-linecap="round" stroke-linejoin="round"><polyline points="22 7 13.5 15.5 8.5 10.5 2 17"/><polyline points="16 7 22 7 22 13"/></svg><span class="t" id="t90" style="left:1032.93px;top:468.91px;font-size:14.28px;color:#22d369;-webkit-text-stroke:0.50px #22d369;transform:scaleX(0.9152);">+12%</span><span class="t" id="t91" style="left:1073.40px;top:469.08px;font-size:14.08px;color:#90a1b9;transform:scaleX(1.0480);">from last month</span><div class="a" style="left:881px;top:499.5px;width:600px;height:1px;background:repeating-linear-gradient(90deg,#262a2f 0 2px,transparent 2px 4px);"></div><div class="a" style="left:881px;top:545.2px;width:600px;height:1px;background:#272b30;"></div><div class="a" style="left:881px;top:590.9px;width:600px;height:1px;background:#272b30;"></div><div class="a" style="left:881px;top:636.5px;width:600px;height:1px;background:#272b30;"></div><div class="a" style="left:881px;top:682.2px;width:600px;height:1px;background:#2d3136;"></div><div class="a" style="left:904px;top:576.19px;width:23.7px;height:106.11px;background:#fee1e0;border-radius:4px 4px 0 0;"></div><div class="a" style="left:932.9px;top:636.66px;width:23.7px;height:45.64px;background:#e60a14;border-radius:4px 4px 0 0;"></div><span class="t" id="t92" style="left:920.22px;top:699.92px;font-size:14.39px;color:#90a1b9;transform:scaleX(0.9300);">Jan</span><div class="a" style="left:1004px;top:508.3px;width:23.7px;height:174.0px;background:#fee1e0;border-radius:4px 4px 0 0;"></div><div class="a" style="left:1032.9px;top:568.2px;width:23.7px;height:114.1px;background:#e60a14;border-radius:4px 4px 0 0;"></div><span class="t" id="t93" style="left:1019.01px;top:699.92px;font-size:14.39px;color:#90a1b9;transform:scaleX(0.9300);">Feb</span><div class="a" style="left:1104px;top:547.09px;width:23.7px;height:135.21px;background:#fee1e0;border-radius:4px 4px 0 0;"></div><div class="a" style="left:1132.9px;top:613.84px;width:23.7px;height:68.46px;background:#e60a14;border-radius:4px 4px 0 0;"></div><span class="t" id="t94" style="left:1118.92px;top:699.92px;font-size:14.39px;color:#90a1b9;transform:scaleX(0.9300);">Mar</span><div class="a" style="left:1204px;top:640.65px;width:23.7px;height:41.65px;background:#fee1e0;border-radius:4px 4px 0 0;"></div><div class="a" style="left:1232.9px;top:573.9px;width:23.7px;height:108.39px;background:#e60a14;border-radius:4px 4px 0 0;"></div><span class="t" id="t95" style="left:1220.50px;top:699.92px;font-size:14.39px;color:#90a1b9;transform:scaleX(0.9300);">Apr</span><div class="a" style="left:1304px;top:563.07px;width:23.7px;height:119.23px;background:#fee1e0;border-radius:4px 4px 0 0;"></div><div class="a" style="left:1332.9px;top:608.13px;width:23.7px;height:74.17px;background:#e60a14;border-radius:4px 4px 0 0;"></div><span class="t" id="t96" style="left:1317.53px;top:699.92px;font-size:14.39px;color:#90a1b9;transform:scaleX(0.9300);">May</span><div class="a" style="left:1404px;top:560.21px;width:23.7px;height:122.09px;background:#fee1e0;border-radius:4px 4px 0 0;"></div><div class="a" style="left:1432.9px;top:602.43px;width:23.7px;height:79.87px;background:#e60a14;border-radius:4px 4px 0 0;"></div><span class="t" id="t97" style="left:1420.22px;top:699.92px;font-size:14.39px;color:#90a1b9;transform:scaleX(0.9300);">Jun</span><div class="a" style="left:864px;top:752px;width:634px;height:360px;background:#181b1e;border:1px solid #303439;border-radius:6px;box-sizing:border-box;"></div><span class="t" id="t98" style="left:884.40px;top:783.15px;font-size:23.8px;color:#ffffff;font-weight:700;transform:scaleX(0.9960);">Volunteers</span><div class="a" style="left:1253px;top:772px;width:224px;height:42.8px;background:#1c1f23;border:1px solid #383c42;border-radius:10px;box-sizing:border-box;"></div><svg class="a" style="left:1267.6px;top:783.9px;" width="20" height="20" viewBox="0 0 24 24" fill="none" stroke="#ffffff" stroke-width="1.8" stroke-linecap="round" stroke-linejoin="round"><path d="M8 2v4"/><path d="M16 2v4"/><rect width="18" height="18" x="3" y="4" rx="2"/><path d="M3 10h18"/></svg><span class="t" id="t99" style="left:1297.55px;top:786.78px;font-size:14.08px;color:#ffffff;-webkit-text-stroke:0.49px #ffffff;transform:scaleX(1.0274);">January 2024 - May 2024</span><div class="a" style="left:875px;top:850px;width:612px;height:220px;overflow:hidden"><span class="t" id="t100" style="left:0.09px;top:15.01px;font-size:17.59px;color:#6c727f;-webkit-text-stroke:0.62px #6c727f;transform:scaleX(0.9425);">Amhara</span><span class="t" id="t101" style="left:-0.65px;top:54.39px;font-size:36.4px;color:#ffffff;transform:scaleX(0.9480);">64</span><div class="a" style="left:-0.20px;top:107.2px;width:1px;height:95.4px;background:#3c72d9"></div><div class="a" style="left:5.81px;top:145.0px;width:1px;height:57.6px;background:#3c72d9"></div><div class="a" style="left:11.82px;top:145.0px;width:1px;height:57.6px;background:#3c72d9"></div><div class="a" style="left:17.83px;top:145.0px;width:1px;height:57.6px;background:#3c72d9"></div><div class="a" style="left:23.84px;top:145.0px;width:1px;height:57.6px;background:#3c72d9"></div><div class="a" style="left:29.85px;top:145.0px;width:1px;height:57.6px;background:#3c72d9"></div><div class="a" style="left:35.86px;top:145.0px;width:1px;height:57.6px;background:#3c72d9"></div><div class="a" style="left:41.87px;top:145.0px;width:1px;height:57.6px;background:#3c72d9"></div><div class="a" style="left:47.88px;top:145.0px;width:1px;height:57.6px;background:#3c72d9"></div><div class="a" style="left:53.89px;top:145.0px;width:1px;height:57.6px;background:#3c72d9"></div><div class="a" style="left:59.90px;top:145.0px;width:1px;height:57.6px;background:#3c72d9"></div><div class="a" style="left:65.91px;top:145.0px;width:1px;height:57.6px;background:#3c72d9"></div><div class="a" style="left:71.92px;top:145.0px;width:1px;height:57.6px;background:#3c72d9"></div><div class="a" style="left:77.93px;top:145.0px;width:1px;height:57.6px;background:#3c72d9"></div><div class="a" style="left:83.94px;top:145.0px;width:1px;height:57.6px;background:#3c72d9"></div><div class="a" style="left:89.95px;top:145.0px;width:1px;height:57.6px;background:#3c72d9"></div><div class="a" style="left:95.96px;top:145.0px;width:1px;height:57.6px;background:#3c72d9"></div><div class="a" style="left:101.97px;top:145.0px;width:1px;height:57.6px;background:#3c72d9"></div><div class="a" style="left:107.98px;top:145.0px;width:1px;height:57.6px;background:#3c72d9"></div><div class="a" style="left:113.99px;top:107.2px;width:1px;height:95.4px;background:#3c72d9"></div><span class="t" id="t102" style="left:139.12px;top:15.01px;font-size:17.59px;color:#6c727f;-webkit-text-stroke:0.62px #6c727f;transform:scaleX(0.9528);">Tigray</span><span class="t" id="t103" style="left:138.34px;top:54.39px;font-size:36.4px;color:#ffffff;transform:scaleX(0.9938);">20</span><div class="a" style="left:138.83px;top:107.2px;width:1px;height:95.4px;background:#c92f38"></div><div class="a" style="left:144.84px;top:145.0px;width:1px;height:57.6px;background:#c92f38"></div><div class="a" style="left:150.85px;top:145.0px;width:1px;height:57.6px;background:#c92f38"></div><div class="a" style="left:156.86px;top:145.0px;width:1px;height:57.6px;background:#c92f38"></div><div class="a" style="left:162.87px;top:145.0px;width:1px;height:57.6px;background:#c92f38"></div><div class="a" style="left:168.88px;top:145.0px;width:1px;height:57.6px;background:#c92f38"></div><div class="a" style="left:174.89px;top:145.0px;width:1px;height:57.6px;background:#c92f38"></div><div class="a" style="left:180.90px;top:145.0px;width:1px;height:57.6px;background:#c92f38"></div><div class="a" style="left:186.91px;top:145.0px;width:1px;height:57.6px;background:#c92f38"></div><div class="a" style="left:192.92px;top:145.0px;width:1px;height:57.6px;background:#c92f38"></div><div class="a" style="left:198.93px;top:145.0px;width:1px;height:57.6px;background:#c92f38"></div><div class="a" style="left:204.94px;top:145.0px;width:1px;height:57.6px;background:#c92f38"></div><div class="a" style="left:210.95px;top:145.0px;width:1px;height:57.6px;background:#c92f38"></div><div class="a" style="left:216.96px;top:145.0px;width:1px;height:57.6px;background:#c92f38"></div><div class="a" style="left:222.97px;top:145.0px;width:1px;height:57.6px;background:#c92f38"></div><div class="a" style="left:228.98px;top:145.0px;width:1px;height:57.6px;background:#c92f38"></div><div class="a" style="left:234.99px;top:145.0px;width:1px;height:57.6px;background:#c92f38"></div><div class="a" style="left:241.00px;top:145.0px;width:1px;height:57.6px;background:#c92f38"></div><div class="a" style="left:247.01px;top:145.0px;width:1px;height:57.6px;background:#c92f38"></div><div class="a" style="left:253.02px;top:107.2px;width:1px;height:95.4px;background:#c92f38"></div><span class="t" id="t104" style="left:278.16px;top:15.01px;font-size:17.59px;color:#6c727f;-webkit-text-stroke:0.62px #6c727f;transform:scaleX(0.9765);">South</span><span class="t" id="t105" style="left:277.39px;top:54.39px;font-size:36.4px;color:#ffffff;transform:scaleX(0.9747);">235</span><div class="a" style="left:277.86px;top:107.2px;width:1px;height:95.4px;background:#8d9096"></div><div class="a" style="left:283.87px;top:145.0px;width:1px;height:57.6px;background:#8d9096"></div><div class="a" style="left:289.88px;top:145.0px;width:1px;height:57.6px;background:#8d9096"></div><div class="a" style="left:295.89px;top:145.0px;width:1px;height:57.6px;background:#8d9096"></div><div class="a" style="left:301.90px;top:145.0px;width:1px;height:57.6px;background:#8d9096"></div><div class="a" style="left:307.91px;top:145.0px;width:1px;height:57.6px;background:#8d9096"></div><div class="a" style="left:313.92px;top:145.0px;width:1px;height:57.6px;background:#8d9096"></div><div class="a" style="left:319.93px;top:145.0px;width:1px;height:57.6px;background:#8d9096"></div><div class="a" style="left:325.94px;top:145.0px;width:1px;height:57.6px;background:#8d9096"></div><div class="a" style="left:331.95px;top:145.0px;width:1px;height:57.6px;background:#8d9096"></div><div class="a" style="left:337.96px;top:145.0px;width:1px;height:57.6px;background:#8d9096"></div><div class="a" style="left:343.97px;top:145.0px;width:1px;height:57.6px;background:#8d9096"></div><div class="a" style="left:349.98px;top:145.0px;width:1px;height:57.6px;background:#8d9096"></div><div class="a" style="left:355.99px;top:145.0px;width:1px;height:57.6px;background:#8d9096"></div><div class="a" style="left:362.00px;top:145.0px;width:1px;height:57.6px;background:#8d9096"></div><div class="a" style="left:368.01px;top:145.0px;width:1px;height:57.6px;background:#8d9096"></div><div class="a" style="left:374.02px;top:145.0px;width:1px;height:57.6px;background:#8d9096"></div><div class="a" style="left:380.03px;top:145.0px;width:1px;height:57.6px;background:#8d9096"></div><div class="a" style="left:386.04px;top:145.0px;width:1px;height:57.6px;background:#8d9096"></div><div class="a" style="left:392.05px;top:107.2px;width:1px;height:95.4px;background:#8d9096"></div><span class="t" id="t106" style="left:417.18px;top:15.01px;font-size:17.59px;color:#6c727f;-webkit-text-stroke:0.62px #6c727f;transform:scaleX(0.9545);">Afar</span><span class="t" id="t107" style="left:416.40px;top:54.39px;font-size:36.4px;color:#ffffff;transform:scaleX(0.9938);">20</span><div class="a" style="left:416.89px;top:107.2px;width:1px;height:95.4px;background:#c92f38"></div><div class="a" style="left:422.90px;top:145.0px;width:1px;height:57.6px;background:#c92f38"></div><div class="a" style="left:428.91px;top:145.0px;width:1px;height:57.6px;background:#c92f38"></div><div class="a" style="left:434.92px;top:145.0px;width:1px;height:57.6px;background:#c92f38"></div><div class="a" style="left:440.93px;top:145.0px;width:1px;height:57.6px;background:#c92f38"></div><div class="a" style="left:446.94px;top:145.0px;width:1px;height:57.6px;background:#c92f38"></div><div class="a" style="left:452.95px;top:145.0px;width:1px;height:57.6px;background:#c92f38"></div><div class="a" style="left:458.96px;top:145.0px;width:1px;height:57.6px;background:#c92f38"></div><div class="a" style="left:464.97px;top:145.0px;width:1px;height:57.6px;background:#c92f38"></div><div class="a" style="left:470.98px;top:145.0px;width:1px;height:57.6px;background:#c92f38"></div><div class="a" style="left:476.99px;top:145.0px;width:1px;height:57.6px;background:#c92f38"></div><div class="a" style="left:483.00px;top:145.0px;width:1px;height:57.6px;background:#c92f38"></div><div class="a" style="left:489.01px;top:145.0px;width:1px;height:57.6px;background:#c92f38"></div><div class="a" style="left:495.02px;top:145.0px;width:1px;height:57.6px;background:#c92f38"></div><div class="a" style="left:501.03px;top:145.0px;width:1px;height:57.6px;background:#c92f38"></div><div class="a" style="left:507.04px;top:145.0px;width:1px;height:57.6px;background:#c92f38"></div><div class="a" style="left:513.05px;top:145.0px;width:1px;height:57.6px;background:#c92f38"></div><div class="a" style="left:519.06px;top:145.0px;width:1px;height:57.6px;background:#c92f38"></div><div class="a" style="left:525.07px;top:145.0px;width:1px;height:57.6px;background:#c92f38"></div><div class="a" style="left:531.08px;top:107.2px;width:1px;height:95.4px;background:#c92f38"></div><span class="t" id="t108" style="left:556.21px;top:15.01px;font-size:17.59px;color:#6c727f;-webkit-text-stroke:0.62px #6c727f;transform:scaleX(0.9284);">Gambela</span><span class="t" id="t109" style="left:555.45px;top:54.39px;font-size:36.4px;color:#ffffff;transform:scaleX(0.9747);">235</span><div class="a" style="left:555.92px;top:107.2px;width:2px;height:95.4px;background:#8f96a8"></div><div class="a" style="left:561.93px;top:145.0px;width:2px;height:57.6px;background:#8f96a8"></div><div class="a" style="left:567.94px;top:145.0px;width:2px;height:57.6px;background:#8f96a8"></div><div class="a" style="left:573.95px;top:145.0px;width:2px;height:57.6px;background:#8f96a8"></div><div class="a" style="left:579.96px;top:145.0px;width:2px;height:57.6px;background:#8f96a8"></div><div class="a" style="left:585.97px;top:145.0px;width:2px;height:57.6px;background:#8f96a8"></div><div class="a" style="left:591.98px;top:145.0px;width:2px;height:57.6px;background:#8f96a8"></div><div class="a" style="left:597.99px;top:145.0px;width:2px;height:57.6px;background:#8f96a8"></div><div class="a" style="left:604.00px;top:145.0px;width:2px;height:57.6px;background:#8f96a8"></div><div class="a" style="left:610.01px;top:145.0px;width:2px;height:57.6px;background:#8f96a8"></div><div class="a" style="left:616.02px;top:145.0px;width:2px;height:57.6px;background:#8f96a8"></div><div class="a" style="left:622.03px;top:145.0px;width:2px;height:57.6px;background:#8f96a8"></div><div class="a" style="left:628.04px;top:145.0px;width:2px;height:57.6px;background:#8f96a8"></div><div class="a" style="left:634.05px;top:145.0px;width:2px;height:57.6px;background:#8f96a8"></div><div class="a" style="left:640.06px;top:145.0px;width:2px;height:57.6px;background:#8f96a8"></div><div class="a" style="left:646.07px;top:145.0px;width:2px;height:57.6px;background:#8f96a8"></div><div class="a" style="left:652.08px;top:145.0px;width:2px;height:57.6px;background:#8f96a8"></div><div class="a" style="left:658.09px;top:145.0px;width:2px;height:57.6px;background:#8f96a8"></div><div class="a" style="left:664.10px;top:145.0px;width:2px;height:57.6px;background:#8f96a8"></div><div class="a" style="left:670.11px;top:107.2px;width:2px;height:95.4px;background:#8f96a8"></div></div><div class="a" style="left:1522px;top:116px;width:360px;height:649.5px;background:#181b1e;border:1px solid #303439;border-radius:16px;box-sizing:border-box;"></div><span class="t" id="t110" style="left:1532.38px;top:138.62px;font-size:23.6px;color:#ffffff;-webkit-text-stroke:0.83px #ffffff;transform:scaleX(1.0487);">Members</span><div class="a" style="left:1842.25px;top:146.75px;width:3.1px;height:3.1px;background:#ffffff;border-radius:50%;"></div><div class="a" style="left:1847.95px;top:146.75px;width:3.1px;height:3.1px;background:#ffffff;border-radius:50%;"></div><div class="a" style="left:1853.65px;top:146.75px;width:3.1px;height:3.1px;background:#ffffff;border-radius:50%;"></div><div class="a" style="left:1522px;top:199px;width:360px;height:1px;background:#303439;"></div><svg class="a" style="left:1602px;top:278.800px" width="200" height="200" viewBox="0 0 200 200"><path d="M16.98 51.20A96.3 96.3 0 0 1 196.30 100.00L172.00 100.00A72 72 0 0 0 37.93 63.51Z" fill="#e30c15"/><path d="M196.30 100.00A96.3 96.3 0 0 1 80.47 194.30L85.40 170.50A72 72 0 0 0 172.00 100.00Z" fill="#fd8a8a"/><path d="M80.47 194.30A96.3 96.3 0 0 1 16.98 51.20L37.93 63.51A72 72 0 0 0 85.40 170.50Z" fill="#4b535b"/></svg><span class="t" id="t111" style="left:1655.10px;top:359.18px;font-size:14.08px;color:#90a1b9;transform:scaleX(1.0165);">Total Members</span><span class="t" id="t112" style="left:1670.75px;top:379.20px;font-size:35.2px;color:#ffffff;font-weight:700;transform:scaleX(1.0466);">662</span><span class="t" id="t113" style="left:1558.16px;top:561.84px;font-size:17.91px;color:#90a1b9;transform:scaleX(0.9450);">Here are some tips on how to improve</span><span class="t" id="t114" style="left:1665.00px;top:585.44px;font-size:17.91px;color:#90a1b9;transform:scaleX(0.8964);">your sales</span><div class="a" style="left:1542px;top:634px;width:319px;height:42.5px;background:#1d2740;border:1px solid #2b3a55;border-radius:4px;box-sizing:border-box;"></div><span class="t" id="t115" style="left:1654.95px;top:648.60px;font-size:16.77px;color:#ffffff;font-weight:700;transform:scaleX(0.9418);">Guide Views</span><div class="a" style="left:1542px;top:706px;width:319px;height:1px;background:#303439;"></div><div class="a" style="left:1588.2px;top:739px;width:14px;height:14px;background:#1f283a;border-radius:4px;"></div><span class="t" id="t116" style="left:1607.20px;top:738.98px;font-size:14.08px;color:#90a1b9;transform:scaleX(1.0224);">Count</span><div class="a" style="left:1660px;top:739px;width:14px;height:14px;background:#fda4a7;border-radius:4px;"></div><span class="t" id="t117" style="left:1678.52px;top:738.98px;font-size:14.08px;color:#90a1b9;transform:scaleX(0.9835);">Percentage</span><div class="a" style="left:1764.3px;top:739px;width:14px;height:14px;background:#e01b28;border-radius:4px;"></div><span class="t" id="t118" style="left:1783.70px;top:738.98px;font-size:14.08px;color:#90a1b9;transform:scaleX(0.8926);">Sales</span><div class="a" style="left:1522px;top:790px;width:360px;height:322px;background:#6e1519;border-radius:16px;"></div><span class="t" id="t119" style="left:1541.62px;top:845.08px;font-size:19.04px;color:#ffffff;-webkit-text-stroke:0.67px #ffffff;transform:scaleX(1.0131);">Unlock Premium Features</span><span class="t" id="t120" style="left:1542.30px;top:890.48px;font-size:14.08px;color:#ffffff;transform:scaleX(1.0232);">We help business to adopt technology and stand</span><span class="t" id="t121" style="left:1542.30px;top:909.28px;font-size:14.08px;color:#ffffff;transform:scaleX(1.0691);">out from the competition through</span><div class="a" style="left:1542px;top:992.8px;width:318.8px;height:43.6px;background:#e9dddd;border-radius:22px;"></div><span class="t" id="t122" style="left:1555.91px;top:1006.26px;font-size:17.18px;color:#1c2530;-webkit-text-stroke:0.24px #1c2530;transform:scaleX(1.0100);">Upgrade now</span><svg class="a" style="left:1827.5px;top:1004.8px;" width="20" height="20" viewBox="0 0 24 24" fill="none" stroke="#1c2530" stroke-width="1.7" stroke-linecap="round" stroke-linejoin="round"><path d="m9 18 6-6-6-6"/></svg></body></html>
